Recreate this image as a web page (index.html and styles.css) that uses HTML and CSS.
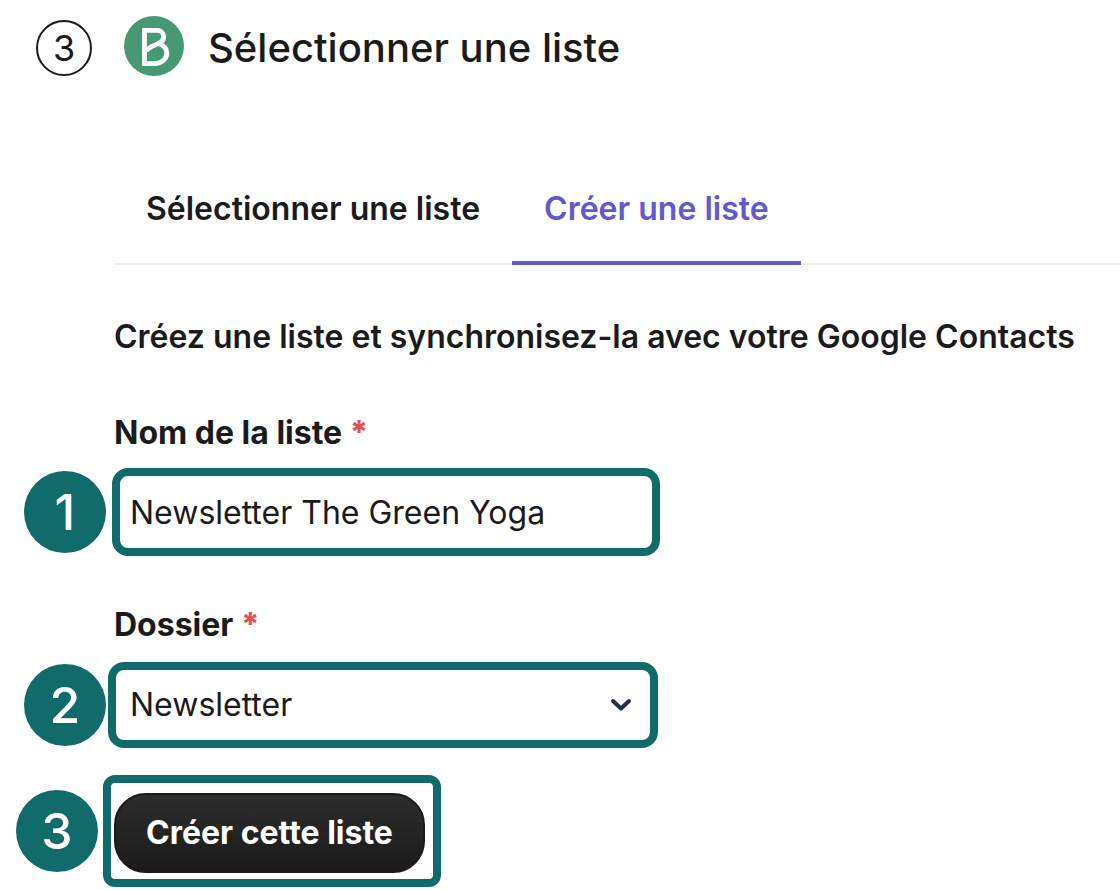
FILE: index.html
```html
<!DOCTYPE html>
<html lang="fr">
    <head>
        <meta charset="utf-8">
        <title>Sélectionner une liste</title>
        <meta name="viewport" content="width=device-width, initial-scale=1.0">
        <link rel="stylesheet" href="styles.css">
    </head>
    <body>
        <header class="step">
            <span class="step-number">3</span>
            <svg class="logo" viewBox="0 0 60 60" aria-hidden="true">
                <circle cx="30" cy="30" r="30" fill="#469973"/>
                <path d="M20.500 50V14.400h12c4.500 0 7.200 2.600 7.200 6.400 0 4.400-3.200 6.200-8.500 8.200-5 1.800-8 3.400-8.700 6.500M34.500 27.500c5.300 1.800 8.300 5.200 8.300 9.500 0 6-5 10.600-12.300 10.600h-10" fill="none" stroke="#fff" stroke-width="4.800"/>
            </svg>
            <h1>Sélectionner une liste</h1>
        </header>
        <nav class="tabs">
            <a class="tab" href="#select">Sélectionner une liste</a>
            <a class="tab active" href="#create">Créer une liste</a>
        </nav>
        <form id="create">
            <h2>Créez une liste et synchronisez-la avec votre Google Contacts</h2>
            <label for="name">Nom de la liste <span class="required">*</span></label>
            <div class="row row-name">
                <span class="badge">1</span>
                <input class="frame" id="name" type="text" value="Newsletter The Green Yoga">
            </div>
            <label for="folder">Dossier <span class="required">*</span></label>
            <div class="row row-folder">
                <span class="badge">2</span>
                <div class="select">
                    <select class="frame" id="folder">
                        <option>Newsletter</option>
                    </select>
                    <svg class="chevron" viewBox="0 0 22 14" aria-hidden="true">
                        <path d="M3 3l8 7.500 8-7.500" fill="none" stroke="#252f45" stroke-width="4" stroke-linecap="round" stroke-linejoin="round"/>
                    </svg>
                </div>
            </div>
            <div class="row row-submit">
                <span class="badge">3</span>
                <div class="frame">
                    <button type="submit">Créer cette liste</button>
                </div>
            </div>
        </form>
    </body>
</html>
```
FILE: styles.css
```css
* {
    box-sizing: border-box;
}
body {
    margin: 0;
    background-color: #fff;
    color: #1b1b1b;
    font-family: Inter, "Liberation Sans", sans-serif;
    font-size: 32px;
    line-height: 40px;
}
.step {
    display: flex;
    align-items: flex-end;
    padding: 16px 36px;
}
.step-number {
    display: flex;
    align-items: center;
    justify-content: center;
    width: 56px;
    height: 56px;
    margin-right: 32px;
    border: 2px solid #1b1b1b;
    border-radius: 50%;
    font-size: 36px;
}
.logo {
    width: 60px;
    height: 60px;
    margin-right: 24px;
}
h1 {
    margin: 0;
    font-size: 40px;
    font-weight: 500;
    line-height: 56px;
}
.tabs {
    display: flex;
    margin: 64px 0 0 114px;
    border-bottom: 2px solid #efefef;
}
.tab {
    margin-bottom: -2px;
    padding: 33px 32px 32px;
    border-bottom: 4px solid transparent;
    color: #1b1b1b;
    font-weight: 600;
    text-decoration: none;
}
.active {
    border-color: #6358d4;
    color: #6358d4;
}
h2 {
    margin: 52px 0 56px 114px;
    font-size: 32px;
    font-weight: 600;
}
label {
    display: block;
    margin: 0 0 15px 114px;
    font-weight: 700;
}
.required {
    color: #eb5055;
    font-weight: 800;
}
.row {
    display: flex;
    align-items: center;
}
.badge {
    display: flex;
    flex: none;
    align-items: center;
    justify-content: center;
    width: 82px;
    height: 82px;
    border-radius: 50%;
    background-color: #126b6b;
    color: #fff;
    font-size: 50px;
    font-weight: 500;
}
.frame {
    border: 8px solid #126b6b;
    border-radius: 16px;
    background-color: #fff;
}
input, select {
    width: 100%;
    color: #1b1b1b;
    font: inherit;
}
input {
    max-width: 548px;
    height: 88px;
    padding: 0 10px;
}
select {
    height: 86px;
    padding: 0 14px;
    appearance: none;
}
.select {
    position: relative;
    flex: 1;
    max-width: 550px;
}
.chevron {
    position: absolute;
    right: 26px;
    top: 36px;
    width: 22px;
    height: 14px;
    pointer-events: none;
}
.row-name {
    gap: 6px;
    margin-bottom: 49px;
    padding-left: 24px;
}
.row-folder {
    gap: 2px;
    margin: 17px 0 27px;
    padding-left: 24px;
}
.row-submit {
    gap: 5px;
    padding-left: 16px;
}
.row-submit .frame {
    padding: 10px 8px 6px 3px;
    border-radius: 12px;
}
button {
    display: block;
    height: 80px;
    padding: 0 30px;
    border: 2px solid #1b1b1b;
    border-radius: 32px;
    background: linear-gradient(#2d2d2d, #1b1b1b);
    color: #fff;
    font: inherit;
    font-weight: 700;
}
```
